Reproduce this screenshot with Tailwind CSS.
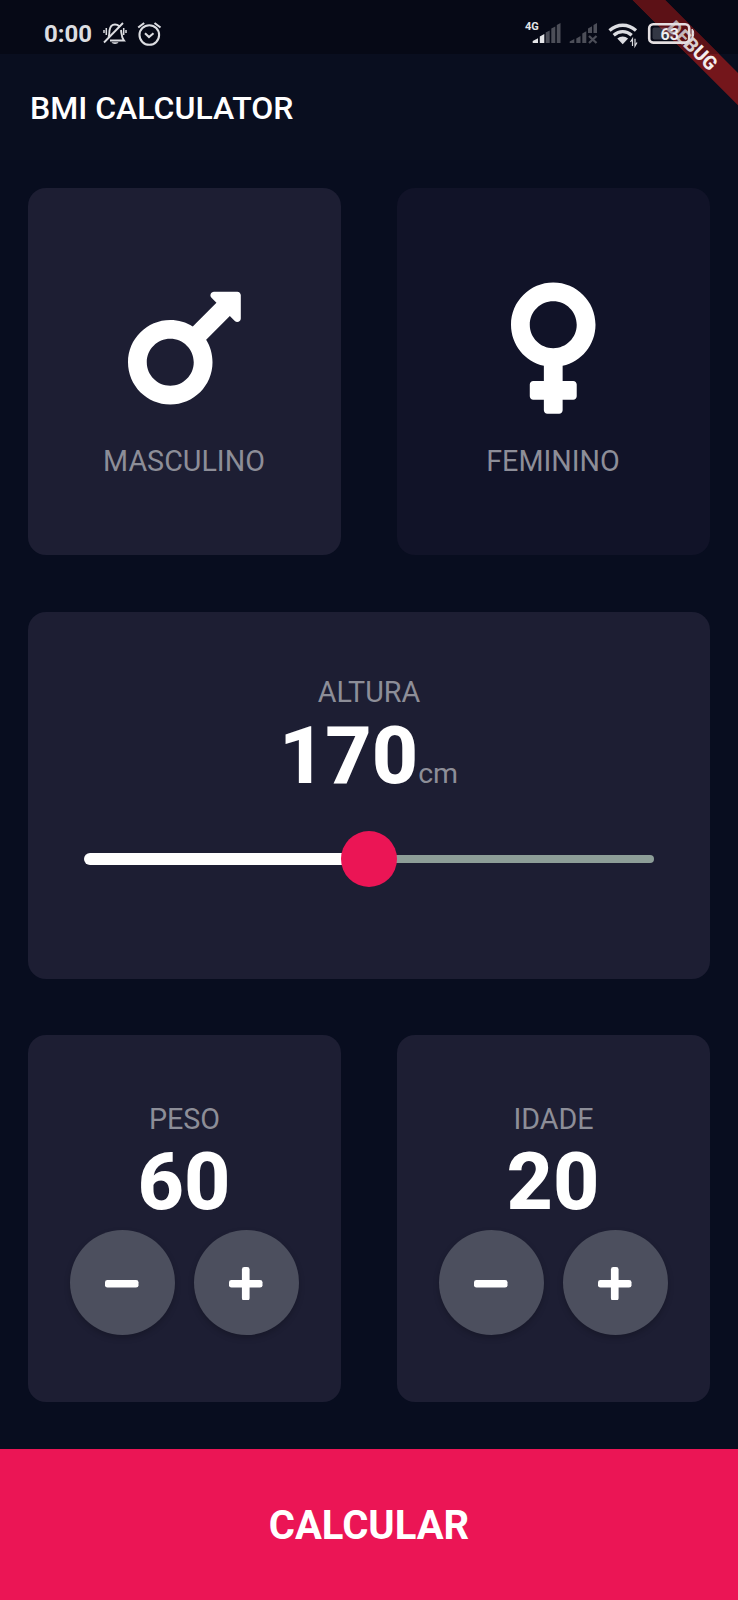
<!DOCTYPE html>
<html lang="pt">
<head>
<meta charset="utf-8">
<title>BMI Calculator</title>
<script src="https://cdn.jsdelivr.net/npm/@tailwindcss/browser@4"></script>
</head>
<body class="bg-[#080d1f] font-['Roboto',sans-serif] text-white">
<div class="relative flex h-[1600px] w-[738px] flex-col overflow-hidden">
  <header class="flex h-[160px] shrink-0 flex-col bg-[#090e1f]">
    <div class="flex h-[54px] items-start justify-between bg-[#060916] pl-[44px] text-[#dcdde1]">
      <div class="flex items-center pt-[19px]">
        <span class="w-[58px] text-[24px] leading-[30px] font-bold">0:00</span>
        <svg class="h-[26px] w-[26px]" viewBox="0 0 26 26" fill="none" stroke="currentColor" stroke-width="1.900"><path d="M6.500 16c1-2 .7-4 1-6.500C8 6 10 3.500 13 3.500c1.800 0 3 .5 4 1.500M19 9c.7 3.500.2 7 3 10.500H8M2 21.500 21 2"/><path d="M4.300 7v7M2 9v3M21.700 7v7M24 9v3" stroke-width="1.500"/><path d="M9.500 21.300h7c-1 2.200-6 2.200-7 0z" fill="currentColor" stroke="none"/></svg>
        <svg class="ml-[8px] h-[26px] w-[26px]" viewBox="0 0 26 26" fill="none" stroke="currentColor" stroke-width="2.100"><circle cx="13.300" cy="14" r="9.800"/><path d="m9 12.300 4 3.700 4.500-3.700M2.200 6.500l6-4.500M24.500 6.500l-6-4.500"/></svg>
      </div>
    </div>
    <h1 class="pt-[35px] pl-[30px] text-[32px] leading-[38px] font-medium">BMI CALCULATOR</h1>
  </header>
  <main class="grid h-[1270px] shrink-0 grid-cols-2 grid-rows-[367px_367px_367px] gap-[56.400px] p-[28.200px]">
    <section class="flex flex-col items-center rounded-[18px] bg-[#1d1e33] pt-[85px]">
      <svg class="h-[150.300px] w-[112.700px] shrink-0" viewBox="0 0 384 512" fill="white"><path d="M372 64h-79c-10.700 0-16 12.900-8.500 20.500l16.900 16.900-80.700 80.700C198.500 167.900 172.200 160 144 160 64.500 160 0 224.500 0 304s64.500 144 144 144 144-64.500 144-144c0-28.200-7.900-54.500-21.700-76.700l80.700-80.700 16.900 16.900c7.600 7.600 20.500 2.200 20.500-8.500V76c0-6.600-5.400-12-12-12zM144 384c-44.100 0-80-35.900-80-80s35.900-80 80-80 80 35.900 80 80-35.900 80-80 80z"/></svg>
      <p class="mt-[20.200px] mr-[1px] text-[28.700px] leading-[34px] text-[#8d8e98]">MASCULINO</p>
    </section>
    <section class="flex flex-col items-center rounded-[18px] bg-[#111328] pt-[85px]">
      <svg class="h-[150.300px] w-[84.500px] shrink-0" viewBox="0 0 288 512" fill="white"><path d="M288 176c0-79.500-64.500-144-144-144S0 96.500 0 176c0 68.500 47.900 125.900 112 140.400V368H76c-6.600 0-12 5.400-12 12v40c0 6.600 5.400 12 12 12h36v36c0 6.600 5.400 12 12 12h40c6.600 0 12-5.400 12-12v-36h36c6.600 0 12-5.400 12-12v-40c0-6.600-5.400-12-12-12h-36v-51.600c64.100-14.600 112-71.900 112-140.400zm-224 0c0-44.100 35.900-80 80-80s80 35.900 80 80-35.900 80-80 80-80-35.900-80-80z"/></svg>
      <p class="mt-[20.200px] mr-[1px] text-[28.700px] leading-[34px] text-[#8d8e98]">FEMININO</p>
    </section>
    <section class="col-span-2 flex flex-col items-center rounded-[18px] bg-[#1d1e33] pt-[63px]">
      <p class="text-[28.700px] leading-[34px] text-[#8d8e98]">ALTURA</p>
      <p class="mr-[1px] flex h-[95px] items-baseline leading-[93px]"><span class="text-[80.500px] font-extrabold">170</span><span class="text-[28.500px] text-[#8d8e98]">cm</span></p>
      <div class="mt-[27px] flex h-[57px] w-[569.400px] items-center"><div class="h-[12px] flex-1 rounded-l-full bg-white"></div><div class="z-10 -mx-1 size-[56.400px] shrink-0 rounded-full bg-[#eb1555]"></div><div class="h-[8px] flex-1 rounded-r-full bg-[#8d9e98]"></div></div>
    </section>
    <section class="flex flex-col items-center rounded-[18px] bg-[#1d1e33] pt-[67px]">
      <p class="text-[28.700px] leading-[34px] text-[#8d8e98]">PESO</p>
      <p class="mr-[1px] mb-[2px] text-[80.500px] leading-[92px] font-extrabold">60</p>
      <div class="flex gap-[18.800px]">
        <button class="flex size-[105.200px] items-center justify-center rounded-full bg-[#4c4f5e] shadow-[0_3px_6px_rgba(0,0,0,0.2)]"><svg class="mt-[2px] mr-[1px] size-[33.500px]" viewBox="0 0 34 34" fill="white"><rect y="13.100" width="34" height="7.800" rx="2.500"/></svg></button>
        <button class="flex size-[105.200px] items-center justify-center rounded-full bg-[#4c4f5e] shadow-[0_3px_6px_rgba(0,0,0,0.2)]"><svg class="mt-[2px] mr-[1px] size-[33.500px]" viewBox="0 0 34 34" fill="white"><rect y="13.100" width="34" height="7.800" rx="2.500"/><rect x="13.100" width="7.800" height="34" rx="2.500"/></svg></button>
      </div>
    </section>
    <section class="flex flex-col items-center rounded-[18px] bg-[#1d1e33] pt-[67px]">
      <p class="text-[28.700px] leading-[34px] text-[#8d8e98]">IDADE</p>
      <p class="mr-[1px] mb-[2px] text-[80.500px] leading-[92px] font-extrabold">20</p>
      <div class="flex gap-[18.800px]">
        <button class="flex size-[105.200px] items-center justify-center rounded-full bg-[#4c4f5e] shadow-[0_3px_6px_rgba(0,0,0,0.2)]"><svg class="mt-[2px] mr-[1px] size-[33.500px]" viewBox="0 0 34 34" fill="white"><rect y="13.100" width="34" height="7.800" rx="2.500"/></svg></button>
        <button class="flex size-[105.200px] items-center justify-center rounded-full bg-[#4c4f5e] shadow-[0_3px_6px_rgba(0,0,0,0.2)]"><svg class="mt-[2px] mr-[1px] size-[33.500px]" viewBox="0 0 34 34" fill="white"><rect y="13.100" width="34" height="7.800" rx="2.500"/><rect x="13.100" width="7.800" height="34" rx="2.500"/></svg></button>
      </div>
    </section>
  </main>
  <button class="mt-[19.400px] flex h-[150.600px] shrink-0 items-center justify-center bg-[#eb1555] pt-[2px] text-[40px] leading-[46px] font-bold">CALCULAR</button>

  <!-- debug ribbon with the system status icons above it -->
  <svg class="absolute top-0 right-0 h-[120px] w-[228px] font-['Roboto',sans-serif]" viewBox="510 0 228 120">
    <path d="M632.700 0H665L738 73v32.300z" fill="#74161b"/>
    <path d="M632.700 0H665l54 54h-32.300z" fill="#5c1116"/>
    <text x="692.500" y="45.500" transform="rotate(45 692.500 45.500)" text-anchor="middle" dominant-baseline="central" font-size="19.200" font-weight="800" fill="#f3eded"><tspan fill="#b5a5a8">D</tspan><tspan fill="#c4b7ba">E</tspan><tspan fill="#d8cfd1">B</tspan>UG</text>
    <text x="525" y="30.300" font-size="11" font-weight="700" fill="#e4e5e8">4G</text>
    <path d="M532.700 43v-2l5.300-2.800V43zM539.800 43v-6.500l4.500-2.500v9z" fill="#e4e5e8"/>
    <path d="M545.700 43V32.500l4-2V43zM551.300 43V28.500l4-2V43zM556.800 43V25l3.700-2v20zM569.700 43v-1.500l4.600-2.500v4zM576.300 43v-4.500l4.200-2.500v7zM582.300 43V33.500l4-2.200V43zM588 33v-4.500l4-2.200V33zM593.500 33v-8l3.500-2v10z" fill="#4c4e58"/>
    <path d="m589 36 7.500 7m0-7-7.500 7" stroke="#4c4e58" stroke-width="2.300"/>
    <g fill="none" stroke="#dcdde1" stroke-width="3.300"><path d="M609.500 30.500c8-7 18.500-7 26.500 0M613.700 35.200c5.500-4.800 12.500-4.800 18 0"/></g>
    <path d="M617.300 38.500c3.200-2.800 7.600-2.800 10.800 0l-5.400 5.700z" fill="#dcdde1"/>
    <path d="m630.500 42 2-3.200v7.200M637 42.500l-2 3.500v-7.200" fill="none" stroke="#dcdde1" stroke-width="1.200"/>
    <rect x="652.500" y="27.500" width="21" height="12" rx="2" fill="#aab0c0" fill-opacity=".28"/>
    <rect x="649.200" y="24.200" width="40" height="18.400" rx="4" fill="none" stroke="#e4dfe1" stroke-width="2.600"/>
    <path d="M692 29c2.200 1 2.200 8 0 9z" fill="#e4dfe1" stroke="#e4dfe1"/>
    <text x="660.500" y="39.800" font-size="16" font-weight="600" fill="#f0f0f2">63</text>
  </svg>
</div>
</body>
</html>
